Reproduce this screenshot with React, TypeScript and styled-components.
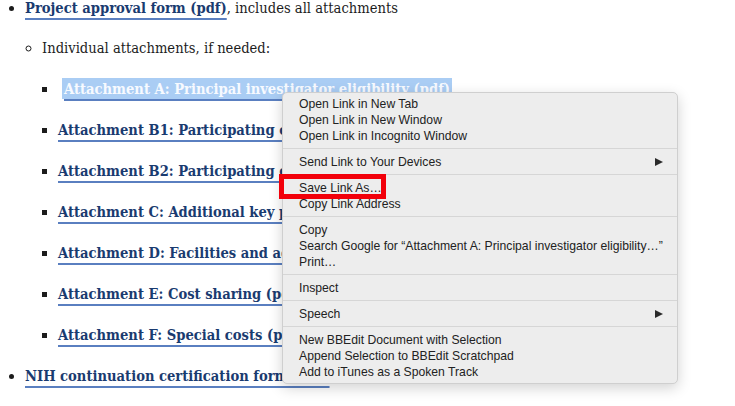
import styled, { createGlobalStyle } from "styled-components";

const GlobalStyle = createGlobalStyle`
  html, body {
    margin: 0;
    padding: 0;
    background: #ffffff;
    overflow: hidden;
  }
  body {
    font-family: "DejaVu Serif Condensed", "DejaVu Serif", "Liberation Serif", serif;
    font-stretch: condensed;
  }
`;

const Page = styled.div`
  position: relative;
  width: 735px;
  height: 406px;
  overflow: hidden;
  color: #1c1c1c;
`;

const List = styled.ul<{ $level: number }>`
  margin: ${(p) =>
    p.$level === 1 ? "-4px 0 0" : p.$level === 2 ? "17px 0 0" : "18px 0 0"};
  padding-left: ${(p) => (p.$level === 1 ? 25 : p.$level === 2 ? 17 : 16)}px;
  list-style-type: ${(p) =>
    p.$level === 1 ? "disc" : p.$level === 2 ? "circle" : "square"};
  font-size: 14.6px;
`;

const Item = styled.li`
  line-height: 23px;
  margin-top: 18px;
  &:first-child {
    margin-top: 0;
  }
`;

const Link = styled.a<{ $selected?: boolean }>`
  font-weight: bold;
  color: ${(p) => (p.$selected ? "#f7faff" : "#1a3b70")};
  background: ${(p) => (p.$selected ? "#aacdf4" : "transparent")};
  padding: ${(p) => (p.$selected ? "2px 2px" : "0")};
  margin-left: ${(p) => (p.$selected ? "4px" : "0")};
  text-decoration: underline;
  text-decoration-color: #5a7fc0;
  text-decoration-thickness: 2px;
  text-underline-offset: 5px;
  cursor: pointer;
`;

const Menu = styled.div`
  position: absolute;
  left: 282px;
  top: 92px;
  width: 396px;
  padding: 3px 0;
  background: #ededed;
  border: 1px solid #cfcfcf;
  border-radius: 5px;
  box-shadow: 0 4px 14px rgba(0, 0, 0, 0.18);
  font-family: "Liberation Sans", Arial, sans-serif;
  font-size: 12.2px;
  color: #222222;
  box-sizing: border-box;
`;

const MenuRow = styled.div`
  position: relative;
  display: flex;
  align-items: center;
  justify-content: space-between;
  height: 16px;
  padding: 0 14px 0 16px;
  white-space: nowrap;
`;

const Separator = styled.div`
  height: 1px;
  margin: 4px 0 5px;
  background: #d6d6d6;
`;

const Arrow = styled.span`
  width: 0;
  height: 0;
  border-top: 4.5px solid transparent;
  border-bottom: 4.5px solid transparent;
  border-left: 8px solid #2a2a2a;
`;

const Callout = styled.span`
  position: absolute;
  left: -4px;
  top: -6px;
  width: 107px;
  height: 25px;
  border: 5px solid #f2000a;
  box-sizing: border-box;
`;

type Entry = { label: string; submenu?: boolean; marked?: boolean } | "sep";

const entries: Entry[] = [
  { label: "Open Link in New Tab" },
  { label: "Open Link in New Window" },
  { label: "Open Link in Incognito Window" },
  "sep",
  { label: "Send Link to Your Devices", submenu: true },
  "sep",
  { label: "Save Link As…", marked: true },
  { label: "Copy Link Address" },
  "sep",
  { label: "Copy" },
  { label: "Search Google for “Attachment A: Principal investigator eligibility…”" },
  { label: "Print…" },
  "sep",
  { label: "Inspect" },
  "sep",
  { label: "Speech", submenu: true },
  "sep",
  { label: "New BBEdit Document with Selection" },
  { label: "Append Selection to BBEdit Scratchpad" },
  { label: "Add to iTunes as a Spoken Track" },
];

const attachments = [
  "Attachment B1: Participating organization (pdf)",
  "Attachment B2: Participating organization budget (pdf)",
  "Attachment C: Additional key personnel (pdf)",
  "Attachment D: Facilities and administrative costs (pdf)",
  "Attachment E: Cost sharing (pdf)",
  "Attachment F: Special costs (pdf)",
];

export default function App() {
  return (
    <Page>
      <GlobalStyle />
      <List $level={1}>
        <Item>
          <Link>Project approval form (pdf)</Link>, includes all attachments
          <List $level={2}>
            <Item>
              Individual attachments, if needed:
              <List $level={3}>
                <Item>
                  <Link $selected>Attachment A: Principal investigator eligibility (pdf)</Link>
                </Item>
                {attachments.map((a) => (
                  <Item key={a}>
                    <Link>{a}</Link>
                  </Item>
                ))}
              </List>
            </Item>
          </List>
        </Item>
        <Item>
          <Link>NIH continuation certification form (pdf)</Link>
        </Item>
      </List>

      <Menu>
        {entries.map((e, i) =>
          e === "sep" ? (
            <Separator key={i} />
          ) : (
            <MenuRow key={i}>
              <span>{e.label}</span>
              {e.submenu && <Arrow />}
              {e.marked && <Callout />}
            </MenuRow>
          )
        )}
      </Menu>
    </Page>
  );
}
